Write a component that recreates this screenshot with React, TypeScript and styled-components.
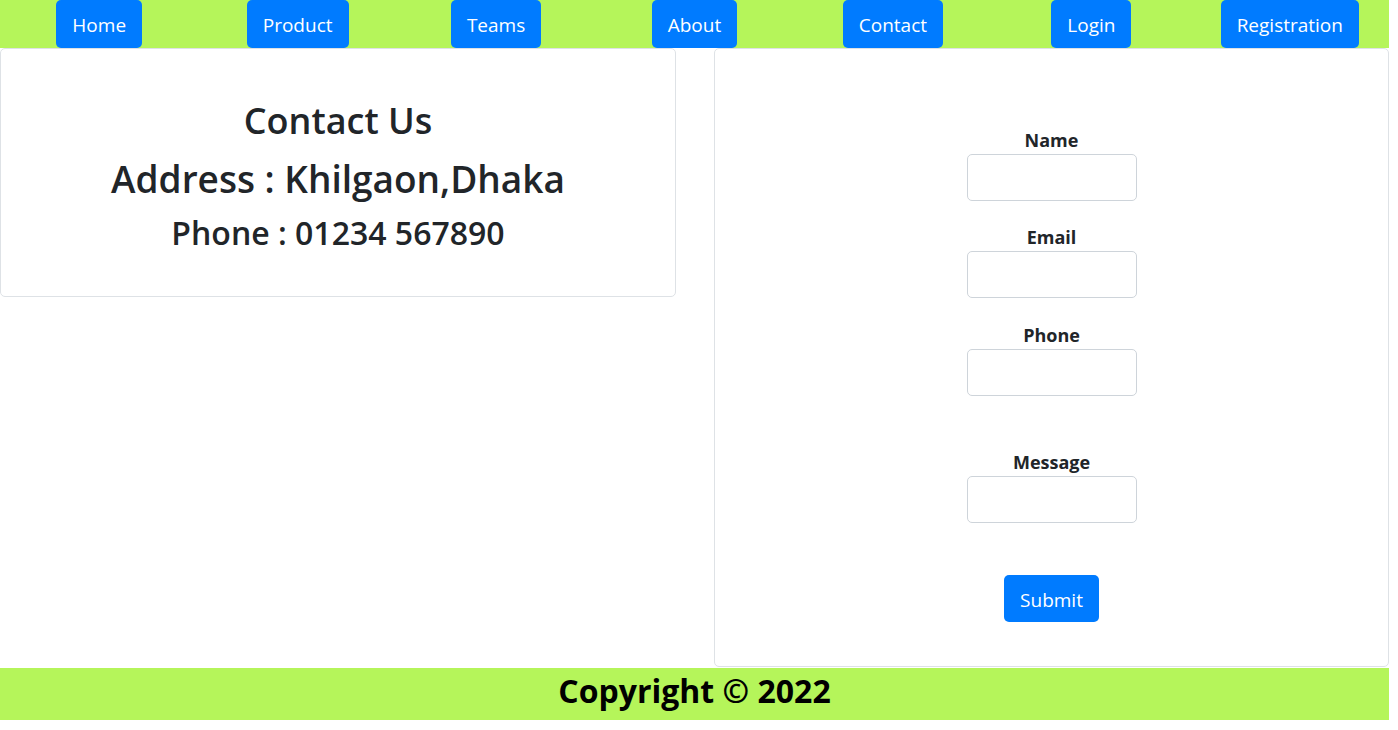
import React from "react";
import styled, { createGlobalStyle } from "styled-components";

const GlobalStyle = createGlobalStyle`
  * { box-sizing: border-box; }
  body {
    margin: 0;
    background: #fff;
    font-family: "Open Sans", "Noto Sans", "Liberation Sans", sans-serif;
    color: #212529;
  }
`;

const links = ["Home", "Product", "Teams", "About", "Contact", "Login", "Registration"];
const fields = [
  { label: "Name", gap: 0 },
  { label: "Email", gap: 25 },
  { label: "Phone", gap: 26 },
  { label: "Message", gap: 55 },
];

const App = () => {
  return (
    <Page>
      <GlobalStyle />
      <NavBar>
        {links.map((l) => (
          <NavCell key={l}>
            <Button>{l}</Button>
          </NavCell>
        ))}
      </NavBar>
      <Main>
        <InfoCard>
          <Title>Contact Us</Title>
          <Address>Address : Khilgaon,Dhaka</Address>
          <Phone>Phone : 01234 567890</Phone>
        </InfoCard>
        <FormCard>
          {fields.map((f) => (
            <Field key={f.label} $gap={f.gap}>
              <Label>{f.label}</Label>
              <Input />
            </Field>
          ))}
          <Submit>Submit</Submit>
        </FormCard>
      </Main>
      <Footer>Copyright © 2022</Footer>
    </Page>
  );
};

export default App;

const Page = styled.div`
  width: 1389px;
`;

const NavBar = styled.nav`
  display: grid;
  grid-template-columns: repeat(7, 1fr);
  height: 48px;
  background: #b5f55a;
`;

const NavCell = styled.div`
  display: flex;
  justify-content: center;
`;

const Button = styled.button`
  height: 48px;
  padding: 2px 16px 0;
  border: none;
  border-radius: 5px;
  background: #007bff;
  color: #fff;
  font-family: inherit;
  font-size: 19px;
  cursor: pointer;
`;

const Main = styled.div`
  display: grid;
  grid-template-columns: 676px 675px;
  column-gap: 38px;
  align-items: start;
`;

const Card = styled.div`
  border: 1px solid #dee2e6;
  border-radius: 5px;
  background: #fff;
`;

const InfoCard = styled(Card)`
  height: 249px;
  padding-top: 52px;
  text-align: center;
`;

const Title = styled.h2`
  margin: 0 0 16px;
  font-size: 36px;
  font-weight: 600;
  line-height: 1.1;
`;

const Address = styled.h1`
  margin: 0 0 12px;
  font-size: 37px;
  font-weight: 600;
  line-height: 1.2;
`;

const Phone = styled.h2`
  margin: 0;
  font-size: 32px;
  font-weight: 600;
  line-height: 1.25;
`;

const FormCard = styled(Card)`
  height: 619px;
  padding-top: 80px;
  display: flex;
  flex-direction: column;
  align-items: center;
`;

const Field = styled.div<{ $gap: number }>`
  display: flex;
  flex-direction: column;
  align-items: center;
  margin-top: ${(p) => p.$gap}px;
`;

const Label = styled.label`
  font-size: 18px;
  font-weight: 700;
  line-height: 22px;
  margin-bottom: 3px;
`;

const Input = styled.input`
  width: 170px;
  height: 47px;
  border: 1px solid #ced4da;
  border-radius: 5px;
  padding: 0 12px;
  font-size: 16px;
`;

const Submit = styled(Button)`
  margin-top: 52px;
  height: 47px;
  width: 95px;
  padding: 2px 0 0;
`;

const Footer = styled.footer`
  height: 52px;
  margin-top: 1px;
  background: #b5f55a;
  color: #000;
  text-align: center;
  font-size: 32px;
  font-weight: 700;
  line-height: 46px;
`;
